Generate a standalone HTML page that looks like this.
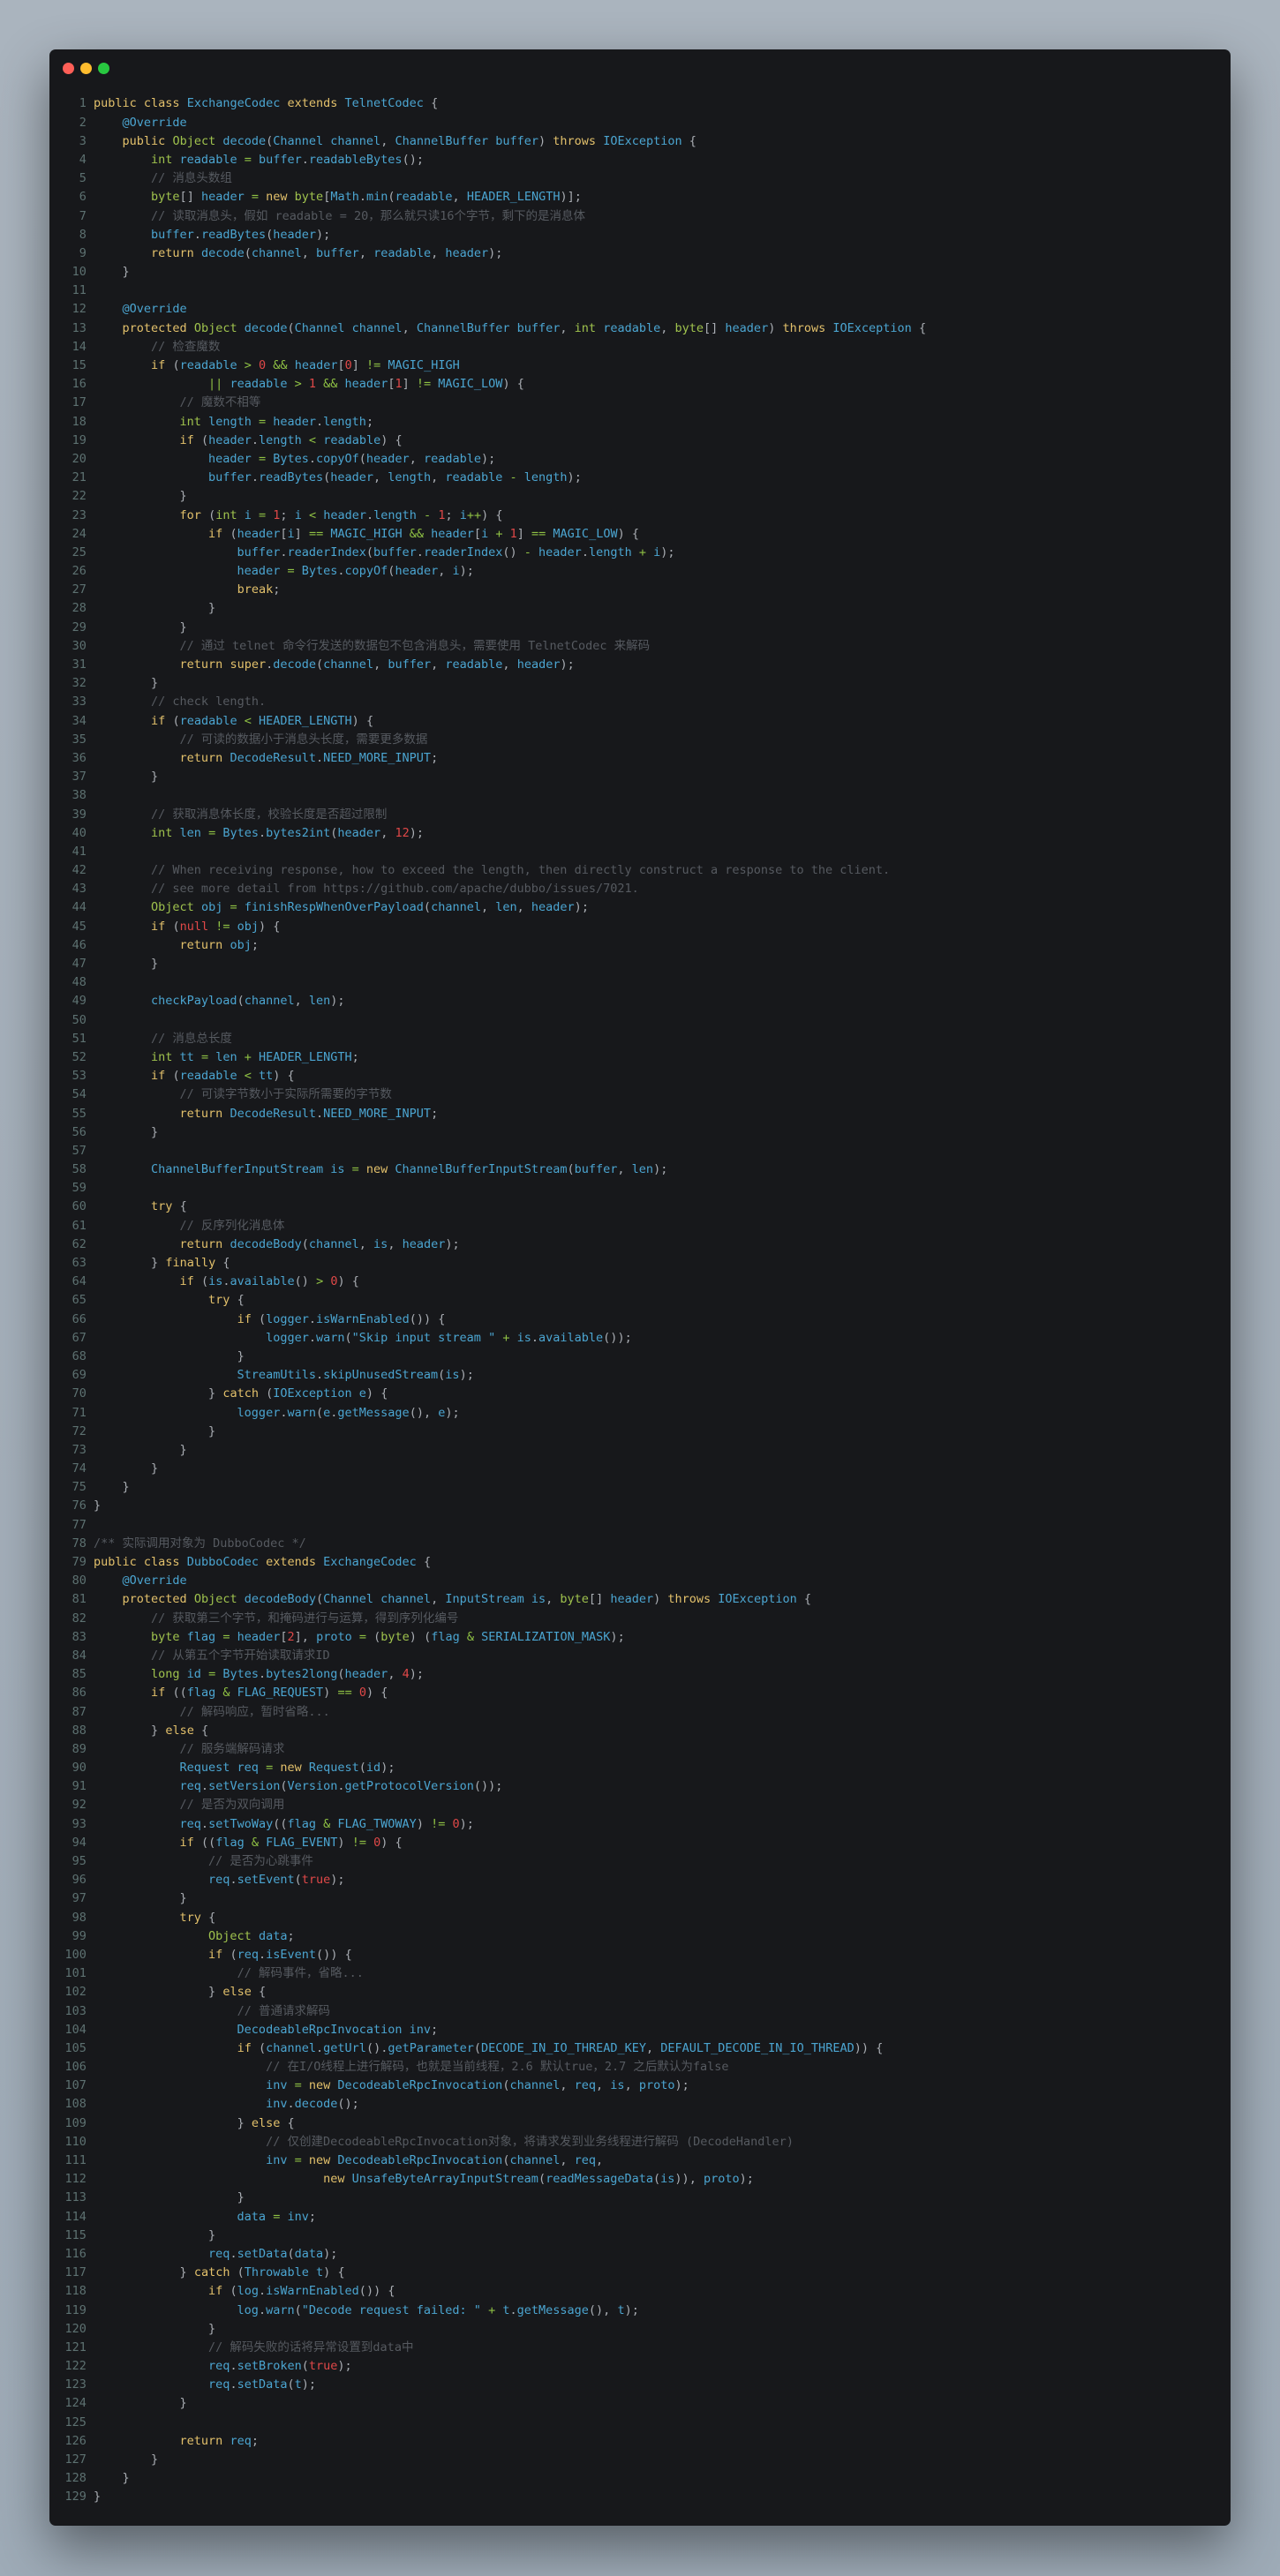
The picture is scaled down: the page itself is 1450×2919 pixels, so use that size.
<!DOCTYPE html>
<html><head><meta charset="utf-8">
<style>
html,body{margin:0;padding:0}
body{width:1450px;height:2919px;background:linear-gradient(180deg,#aab4be 0%,#a3aeb9 60%,#9eabb7 100%);position:relative;overflow:hidden}
.win{position:absolute;left:56px;top:56px;width:1338px;height:2806px;background:#17181b;border-radius:7px;box-shadow:0 24px 60px rgba(0,0,0,.45)}
.dot{position:absolute;top:14.5px;width:13px;height:13px;border-radius:50%}
pre{margin:0;position:absolute;top:51.4px;font-family:"DejaVu Sans Mono","Liberation Mono","Noto Sans CJK SC",monospace;font-size:13.5px;line-height:21.19px;white-space:pre}
.ln{left:17.5px;width:24.4px;text-align:right;color:#5d7171}
.code{left:50px;color:#4ba5d1}
.kw{color:#e2c06b}.ty{color:#9fc24d}.pu{color:#a9adb3}.cm{color:#565a60;font-family:"DejaVu Sans Mono","Noto Sans CJK SC",monospace}.nu{color:#e04848}.op{color:#8fc144}
</style></head><body>
<div class="win">
<div class="dot" style="left:14.5px;background:#fe5f57"></div>
<div class="dot" style="left:34.5px;background:#febc2e"></div>
<div class="dot" style="left:54.5px;background:#28c840"></div>
<pre class="ln">1
2
3
4
5
6
7
8
9
10
11
12
13
14
15
16
17
18
19
20
21
22
23
24
25
26
27
28
29
30
31
32
33
34
35
36
37
38
39
40
41
42
43
44
45
46
47
48
49
50
51
52
53
54
55
56
57
58
59
60
61
62
63
64
65
66
67
68
69
70
71
72
73
74
75
76
77
78
79
80
81
82
83
84
85
86
87
88
89
90
91
92
93
94
95
96
97
98
99
100
101
102
103
104
105
106
107
108
109
110
111
112
113
114
115
116
117
118
119
120
121
122
123
124
125
126
127
128
129</pre>
<pre class="code" id="code">public class ExchangeCodec extends TelnetCodec {
    @Override
    public Object decode(Channel channel, ChannelBuffer buffer) throws IOException {
        int readable = buffer.readableBytes();
        // 消息头数组
        byte[] header = new byte[Math.min(readable, HEADER_LENGTH)];
        // 读取消息头，假如 readable = 20，那么就只读16个字节，剩下的是消息体
        buffer.readBytes(header);
        return decode(channel, buffer, readable, header);
    }

    @Override
    protected Object decode(Channel channel, ChannelBuffer buffer, int readable, byte[] header) throws IOException {
        // 检查魔数
        if (readable &gt; 0 &amp;&amp; header[0] != MAGIC_HIGH
                || readable &gt; 1 &amp;&amp; header[1] != MAGIC_LOW) {
            // 魔数不相等
            int length = header.length;
            if (header.length &lt; readable) {
                header = Bytes.copyOf(header, readable);
                buffer.readBytes(header, length, readable - length);
            }
            for (int i = 1; i &lt; header.length - 1; i++) {
                if (header[i] == MAGIC_HIGH &amp;&amp; header[i + 1] == MAGIC_LOW) {
                    buffer.readerIndex(buffer.readerIndex() - header.length + i);
                    header = Bytes.copyOf(header, i);
                    break;
                }
            }
            // 通过 telnet 命令行发送的数据包不包含消息头，需要使用 TelnetCodec 来解码
            return super.decode(channel, buffer, readable, header);
        }
        // check length.
        if (readable &lt; HEADER_LENGTH) {
            // 可读的数据小于消息头长度，需要更多数据
            return DecodeResult.NEED_MORE_INPUT;
        }

        // 获取消息体长度，校验长度是否超过限制
        int len = Bytes.bytes2int(header, 12);

        // When receiving response, how to exceed the length, then directly construct a response to the client.
        // see more detail from https://github.com/apache/dubbo/issues/7021.
        Object obj = finishRespWhenOverPayload(channel, len, header);
        if (null != obj) {
            return obj;
        }

        checkPayload(channel, len);

        // 消息总长度
        int tt = len + HEADER_LENGTH;
        if (readable &lt; tt) {
            // 可读字节数小于实际所需要的字节数
            return DecodeResult.NEED_MORE_INPUT;
        }

        ChannelBufferInputStream is = new ChannelBufferInputStream(buffer, len);

        try {
            // 反序列化消息体
            return decodeBody(channel, is, header);
        } finally {
            if (is.available() &gt; 0) {
                try {
                    if (logger.isWarnEnabled()) {
                        logger.warn("Skip input stream " + is.available());
                    }
                    StreamUtils.skipUnusedStream(is);
                } catch (IOException e) {
                    logger.warn(e.getMessage(), e);
                }
            }
        }
    }
}

/** 实际调用对象为 DubboCodec */
public class DubboCodec extends ExchangeCodec {
    @Override
    protected Object decodeBody(Channel channel, InputStream is, byte[] header) throws IOException {
        // 获取第三个字节，和掩码进行与运算，得到序列化编号
        byte flag = header[2], proto = (byte) (flag &amp; SERIALIZATION_MASK);
        // 从第五个字节开始读取请求ID
        long id = Bytes.bytes2long(header, 4);
        if ((flag &amp; FLAG_REQUEST) == 0) {
            // 解码响应，暂时省略...
        } else {
            // 服务端解码请求
            Request req = new Request(id);
            req.setVersion(Version.getProtocolVersion());
            // 是否为双向调用
            req.setTwoWay((flag &amp; FLAG_TWOWAY) != 0);
            if ((flag &amp; FLAG_EVENT) != 0) {
                // 是否为心跳事件
                req.setEvent(true);
            }
            try {
                Object data;
                if (req.isEvent()) {
                    // 解码事件，省略...
                } else {
                    // 普通请求解码
                    DecodeableRpcInvocation inv;
                    if (channel.getUrl().getParameter(DECODE_IN_IO_THREAD_KEY, DEFAULT_DECODE_IN_IO_THREAD)) {
                        // 在I/O线程上进行解码，也就是当前线程，2.6 默认true，2.7 之后默认为false
                        inv = new DecodeableRpcInvocation(channel, req, is, proto);
                        inv.decode();
                    } else {
                        // 仅创建DecodeableRpcInvocation对象，将请求发到业务线程进行解码 (DecodeHandler)
                        inv = new DecodeableRpcInvocation(channel, req,
                                new UnsafeByteArrayInputStream(readMessageData(is)), proto);
                    }
                    data = inv;
                }
                req.setData(data);
            } catch (Throwable t) {
                if (log.isWarnEnabled()) {
                    log.warn("Decode request failed: " + t.getMessage(), t);
                }
                // 解码失败的话将异常设置到data中
                req.setBroken(true);
                req.setData(t);
            }

            return req;
        }
    }
}</pre>
</div>
<script>
(function(){
var el=document.getElementById('code');
var kw={"public":1,"class":1,"extends":1,"protected":1,"return":1,"new":1,"if":1,"for":1,"break":1,"super":1,"throws":1,"try":1,"finally":1,"catch":1,"else":1};
var ty={"int":1,"byte":1,"long":1,"Object":1,"void":1,"boolean":1};
var lit={"null":1,"true":1,"false":1};
function esc(s){return s.replace(/&/g,'&amp;').replace(/</g,'&lt;').replace(/>/g,'&gt;');}
var lines=el.textContent.split('\n');
var re=/(\/\/.*$|\/\*\*.*?\*\/)|("(?:[^"\\]|\\.)*")|(@\w+)|(\b\d+\b)|([A-Za-z_]\w*)|([=+\-<>&|!]+)|([(){}\[\],;.])|(\s+)|(.)/g;
var out=lines.map(function(line){
  var h='',m;re.lastIndex=0;
  while((m=re.exec(line))!==null){
    if(m[0]==='')break;
    var t=esc(m[0]);
    if(m[1])h+='<span class="cm">'+t+'</span>';
    else if(m[2]||m[3])h+=t;
    else if(m[4])h+='<span class="nu">'+t+'</span>';
    else if(m[5]){
      if(kw[m[5]])h+='<span class="kw">'+t+'</span>';
      else if(ty[m[5]])h+='<span class="ty">'+t+'</span>';
      else if(lit[m[5]])h+='<span class="nu">'+t+'</span>';
      else h+=t;
    }
    else if(m[6])h+='<span class="op">'+t+'</span>';
    else if(m[7])h+='<span class="pu">'+t+'</span>';
    else h+=t;
  }
  return h;
});
el.innerHTML=out.join('\n');
})();
</script>
</body></html>
